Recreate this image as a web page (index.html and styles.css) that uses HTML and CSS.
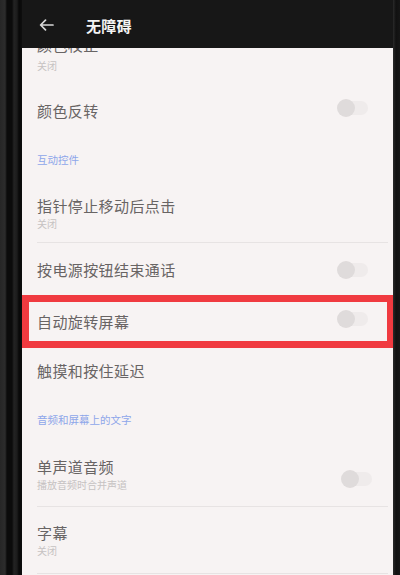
FILE: index.html
```html
<!DOCTYPE html>
<html lang="zh-CN">
<head>
<meta charset="utf-8">
<title>无障碍</title>
<link rel="stylesheet" href="styles.css">
</head>
<body>
<div class="device">
  <div class="bezel-left"></div>
  <div class="screen">
    <header class="appbar">
      <svg class="back" width="15" height="12" viewBox="0 0 15 12" aria-hidden="true">
        <path d="M14 6H2M6.5 1.2L1.6 6l4.9 4.8" fill="none" stroke="#d8d8d8" stroke-width="1.7" stroke-linecap="round" stroke-linejoin="round"/>
      </svg>
      <h1 class="title">无障碍</h1>
    </header>
    <main class="list">
      <div class="row row-first">
        <div class="text">
          <div class="row-title">颜色校正</div>
          <div class="row-sub">关闭</div>
        </div>
      </div>
      <div class="row row-single row-invert">
        <div class="row-title">颜色反转</div>
        <span class="switch"></span>
      </div>
      <div class="section section-interact">互动控件</div>
      <div class="row row-double row-pointer">
        <div class="text">
          <div class="row-title">指针停止移动后点击</div>
          <div class="row-sub">关闭</div>
        </div>
      </div>
      <div class="row row-single row-power">
        <div class="row-title">按电源按钮结束通话</div>
        <span class="switch"></span>
      </div>
      <div class="row row-single row-rotate">
        <div class="row-title">自动旋转屏幕</div>
        <span class="switch"></span>
        <span class="highlight"></span>
      </div>
      <div class="row row-single row-touch">
        <div class="row-title">触摸和按住延迟</div>
      </div>
      <div class="section section-audio">音频和屏幕上的文字</div>
      <div class="row row-double row-mono">
        <div class="text">
          <div class="row-title">单声道音频</div>
          <div class="row-sub">播放音频时合并声道</div>
        </div>
        <span class="switch"></span>
      </div>
      <div class="row row-double row-caption">
        <div class="text">
          <div class="row-title">字幕</div>
          <div class="row-sub">关闭</div>
        </div>
      </div>
    </main>
  </div>
  <div class="bezel-right"></div>
</div>
</body>
</html>
```
FILE: styles.css
```css
* { box-sizing: border-box; }
html, body {
  margin: 0;
  padding: 0;
  width: 400px;
  height: 575px;
  overflow: hidden;
  background: #151515;
  font-family: "Noto Sans CJK SC", "Noto Sans", sans-serif;
}
.device {
  display: flex;
  width: 400px;
  height: 575px;
}
.bezel-left {
  width: 22px;
  flex: none;
  background: linear-gradient(to right, #262626 0, #2c2c2c 5px, #0b0b0b 7px, #0b0b0b 12px, #232323 14px, #1c1c1c 17px, #080808 19px, #0e0e0e 22px);
}
.bezel-right {
  width: 7px;
  flex: none;
  background: linear-gradient(to right, #2a2a2a 0, #111 3px, #161616 7px);
}
.screen {
  flex: 1;
  display: flex;
  flex-direction: column;
  min-width: 0;
}
.appbar {
  height: 48px;
  flex: none;
  display: flex;
  align-items: center;
  gap: 32px;
  padding: 2px 0 0 17px;
  background: #171717;
}
.back { display: block; }
.title {
  margin: 0;
  font-size: 15px;
  font-weight: 700;
  color: #f4f4f4;
  letter-spacing: 0.3px;
}
.list {
  flex: 1;
  background: #f7f3f3;
  overflow: hidden;
  display: flex;
  flex-direction: column;
}
.row {
  position: relative;
  display: flex;
  align-items: center;
  justify-content: space-between;
  padding: 0 25px 0 15px;
  flex: none;
}
.row-title {
  font-size: 15px;
  line-height: 20px;
  color: #686464;
  letter-spacing: 0.4px;
}
.row-sub {
  font-size: 10px;
  line-height: 16px;
  color: #c6c2c2;
}
.row-first {
  margin-top: -13px;
  padding-bottom: 12px;
}
.row-first .row-sub { margin-top: 3px; }
.row-invert { height: 50px; }
.row-power { height: 53px; }
.row-rotate { height: 52px; }
.row-touch { height: 46px; }
.row-double::after {
  content: "";
  position: absolute;
  left: 15px;
  right: 5px;
  bottom: 0;
  height: 1px;
  background: #e7e3e3;
}
.row-pointer { padding-top: 16px; padding-bottom: 11px; }
.row-mono { padding-top: 17px; padding-bottom: 14px; }
.row-caption { padding-top: 16px; padding-bottom: 15px; }
.row-mono .switch { margin-top: 8px; margin-right: -4px; }
.section {
  font-size: 10.5px;
  line-height: 16px;
  color: #8ea6ea;
  padding: 0 15px;
  flex: none;
}
.section-interact { padding-top: 16px; padding-bottom: 12px; }
.section-audio { padding-top: 18px; padding-bottom: 12px; }
.switch {
  position: relative;
  width: 30px;
  height: 14px;
  border-radius: 7px;
  background: #efebeb;
  flex: none;
}
.switch::after {
  content: "";
  position: absolute;
  left: -1px;
  top: -2px;
  width: 18px;
  height: 18px;
  border-radius: 50%;
  background: #dfdbdb;
}
.row-invert .switch { margin-top: -6px; }
.row-rotate .switch { margin-top: -6px; }
.highlight {
  position: absolute;
  left: 0;
  right: -1px;
  top: -1px;
  bottom: 0;
  border: 7px solid #f03a40;
  pointer-events: none;
}
```
